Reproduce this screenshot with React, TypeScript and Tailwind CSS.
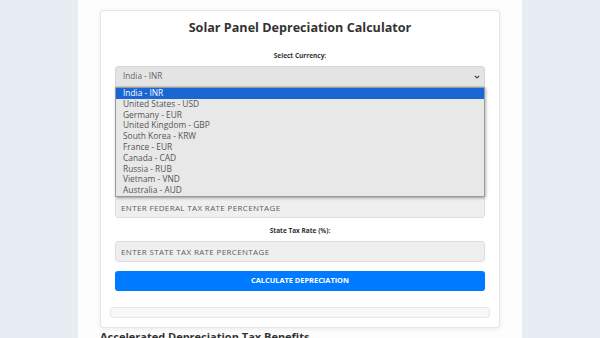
import React from 'react';

const currencies = [
  'India - INR',
  'United States - USD',
  'Germany - EUR',
  'United Kingdom - GBP',
  'South Korea - KRW',
  'France - EUR',
  'Canada - CAD',
  'Russia - RUB',
  'Vietnam - VND',
  'Australia - AUD',
];

function Field({
  label,
  placeholder,
  hidden,
  coveredLabel,
  first,
}: {
  label: string;
  placeholder: string;
  hidden?: boolean;
  coveredLabel?: boolean;
  first?: boolean;
}) {
  return (
    <div className={hidden ? (first ? 'invisible mt-[7px]' : 'invisible mt-[8px]') : 'mt-[8px]'} aria-hidden={hidden}>
      <label
        className={
          coveredLabel
            ? 'invisible block text-center text-[6.5px] font-bold leading-[10px] text-[#333]'
            : 'block text-center text-[6.5px] font-bold leading-[10px] text-[#333]'
        }
      >
        {label}
      </label>
      <div className="mt-[5px] h-[21px] rounded-[3px] border border-[#dddddd] bg-[#efefef] px-[5px] text-[8px] leading-[19px] tracking-[0.35px] text-[#5c5c5c]">
        {placeholder}
      </div>
    </div>
  );
}

export default function App() {
  return (
    <div className="min-h-[338px] bg-[#e8ecf3]" style={{ fontFamily: '"Open Sans", sans-serif' }}>
      <div className="mx-auto h-[338px] w-[444px] overflow-hidden bg-[#fdfdfe] px-[22px] pt-[10px]">
        <div className="rounded-[3px] border border-[#e6e6e8] bg-white px-[14px] pb-[9px] pt-[8px] shadow-[0_1px_4px_rgba(0,0,0,0.08)]">
          <h1 className="text-center text-[12.6px] font-bold leading-[18px] text-[#333]">
            Solar Panel Depreciation Calculator
          </h1>

          <label className="mt-[14px] block text-center text-[6.5px] font-bold leading-[10px] text-[#333]">
            Select Currency:
          </label>
          <div className="relative mt-[5px]">
            <div className="flex h-[21px] items-center justify-between rounded-t-[3px] border border-[#d6d6d6] bg-[#e4e4e4] pl-[7px] pr-[4px] text-[8.2px] text-[#666]">
              <span>India - INR</span>
              <svg width="6" height="4" viewBox="0 0 6 4" className="text-[#444]">
                <path d="M0.8 0.8 L3 3 L5.2 0.8" fill="none" stroke="currentColor" strokeWidth="1.2" />
              </svg>
            </div>
            <ul className="absolute left-0 right-0 top-[21px] z-10 border border-[#9a9a9a] bg-[#e8e8e8] shadow-[1px_1px_3px_rgba(0,0,0,0.3)]">
              {currencies.map((c, i) => (
                <li
                  key={c}
                  className={
                    i === 0
                      ? 'h-[10.8px] bg-[#1967d2] pl-[7px] text-[8.4px] leading-[10.8px] text-white'
                      : 'h-[10.8px] pl-[7px] text-[8.4px] leading-[10.8px] text-[#555]'
                  }
                >
                  {c}
                </li>
              ))}
            </ul>
          </div>

          <Field hidden first label="Solar Panel Cost:" placeholder="ENTER SOLAR PANEL COST" />
          <Field hidden label="Useful Life (Years):" placeholder="ENTER USEFUL LIFE IN YEARS" />
          <Field coveredLabel label="Federal Tax Rate (%):" placeholder="ENTER FEDERAL TAX RATE PERCENTAGE" />
          <Field label="State Tax Rate (%):" placeholder="ENTER STATE TAX RATE PERCENTAGE" />

          <button className="mt-[9px] block h-[20px] w-full rounded-[3px] bg-[#007bff] text-[7.4px] font-bold text-white">
            CALCULATE DEPRECIATION
          </button>

          <div className="mx-[-5px] mt-[16px] h-[11px] rounded-[3px] border border-[#e6e6e6] bg-[#f8f8f9]" />
        </div>

        <h2 className="mt-[1px] text-[11px] font-bold leading-[16px] text-[#333]">
          Accelerated Depreciation Tax Benefits
        </h2>
      </div>
    </div>
  );
}
